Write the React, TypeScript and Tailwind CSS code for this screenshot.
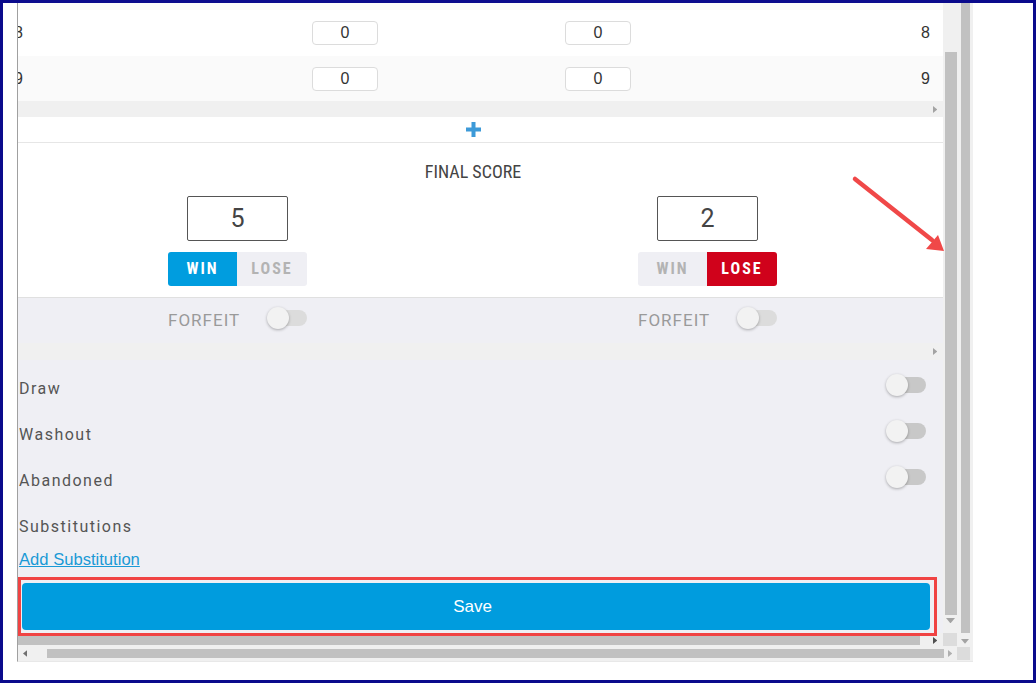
import React from "react";

const roboto = "font-['Roboto',sans-serif]";
const arial = "font-['Liberation_Sans',Arial,sans-serif]";
const narrow =
  "font-['Roboto_Condensed','Liberation_Sans_Narrow','DejaVu_Sans_Condensed',Roboto,sans-serif] [font-stretch:condensed]";

function Tri({ dir, color = "#a3a3a3", size = 7 }: { dir: "r" | "l" | "d"; color?: string; size?: number }) {
  const pts = dir === "r" ? "0,0 6,5 0,10" : dir === "l" ? "6,0 0,5 6,10" : "0,0 10,0 5,6";
  const vb = dir === "d" ? "0 0 10 6" : "0 0 6 10";
  return (
    <svg viewBox={vb} width={dir === "d" ? size : size * 0.6} height={dir === "d" ? size * 0.6 : size}>
      <polygon points={pts} fill={color} />
    </svg>
  );
}

function Toggle({ light }: { light?: boolean }) {
  return (
    <div className="relative h-[22px] w-[40px] shrink-0">
      <div
        className={`absolute right-0 top-[3px] h-[16px] w-[34px] rounded-full ${
          light ? "bg-[#dcdcdc]" : "bg-[#c8c8c8]"
        }`}
      />
      <div className="absolute left-0 top-0 h-[22px] w-[22px] rounded-full bg-[#f2f2f2] shadow-[0_1px_3px_rgba(0,0,0,0.3)]" />
    </div>
  );
}

function ZeroBox() {
  return (
    <div className="h-6 rounded-[4px] border border-[#dcdcdc] bg-white text-center text-[16px] leading-[22px] text-[#333]">
      0
    </div>
  );
}

function ScoreRow({ n, shade, h }: { n: number; shade?: boolean; h: string }) {
  return (
    <div
      className={`grid grid-cols-[310px_66px_187px_66px_1fr] items-center ${h} ${
        shade ? "bg-[#fafafa]" : "bg-white"
      } ${arial} text-[16px] text-[#333]`}
    >
      <span className="pl-3">{n}</span>
      <ZeroBox />
      <span />
      <ZeroBox />
      <span className="pr-[14px] text-right">{n}</span>
    </div>
  );
}

function ScrollStrip({ h }: { h: string }) {
  return (
    <div className={`flex ${h} items-center justify-end bg-[#f0f0f0] pr-[6px]`}>
      <Tri dir="r" />
    </div>
  );
}

function TeamScore({ score, won }: { score: number; won: boolean }) {
  return (
    <div className="flex flex-col items-center">
      <div
        className={`flex h-[45px] w-[101px] items-center justify-center rounded-[2px] border border-[#555] text-[25px] text-[#444] ${roboto}`}
      >
        {score}
      </div>
      <div className={`mt-[11px] flex h-[34px] w-[139px] overflow-hidden rounded-[3px] ${narrow}`}>
        <div
          className={`flex w-[69px] items-center justify-center text-[16px] font-bold tracking-[2px] ${
            won ? "bg-[#009ddf] text-white" : "bg-[#efeff4] text-[#b3b3b3]"
          }`}
        >
          WIN
        </div>
        <div
          className={`flex flex-1 items-center justify-center text-[16px] font-bold tracking-[2px] ${
            won ? "bg-[#efeff4] text-[#b3b3b3]" : "bg-[#d0021b] text-white"
          }`}
        >
          LOSE
        </div>
      </div>
    </div>
  );
}

function Forfeit() {
  return (
    <div className="flex justify-center">
      <div className="flex w-[139px] items-center justify-between">
        <span className={`mt-[1px] text-[17px] tracking-[1px] text-[#9a9a9a] ${roboto}`}>FORFEIT</span>
        <div className="mb-[5px]">
          <Toggle light />
        </div>
      </div>
    </div>
  );
}

function OptionRow({ label }: { label: string }) {
  return (
    <div className="flex h-[46px] items-center justify-between pl-px pr-[17px]">
      <span className={`text-[16px] tracking-[1.5px] text-[#555] ${roboto}`}>{label}</span>
      <div className="mb-2">
        <Toggle />
      </div>
    </div>
  );
}

export default function App() {
  return (
    <div className="relative h-[683px] w-[1036px] overflow-hidden border-[3px] border-[#0a0a8c] bg-white">
      <div className="flex pl-[14px]">
        <div className="flex h-[659px] w-[956px] flex-col border-b border-l border-b-[#e8e8e8] border-l-[#a0a0a0]">
          <div className="flex h-[643px]">
            {/* inner scroller */}
            <div className="grid w-[939px] grid-cols-[925px_14px] grid-rows-[630px_13px]">
              <div className="flex flex-col overflow-hidden">
                <div className="-ml-4 w-[942px]">
                  <div className="h-[7px] bg-[#fafafa]" />
                  <ScoreRow n={8} h="h-[46px]" />
                  <ScoreRow n={9} h="h-[45px]" shade />
                </div>
                <ScrollStrip h="h-[16px]" />
                <div className="-ml-4 w-[942px]">
                  <div className="flex h-[26px] items-center justify-center border-b border-[#e6e6e6] bg-white pb-[1px]">
                    <svg width="15" height="15" viewBox="0 0 15 15">
                      <rect x="5.5" y="0" width="4" height="15" fill="#3d9ad8" />
                      <rect x="0" y="5.5" width="15" height="4" fill="#3d9ad8" />
                    </svg>
                  </div>
                  <div className="h-[154px] bg-white pt-[19px]">
                    <div
                      className={`h-[20px] text-center text-[18px] leading-[20px] text-[#444] ${narrow}`}
                    >
                      FINAL SCORE
                    </div>
                    <div className="mt-[14px] grid grid-cols-2">
                      <TeamScore score={5} won />
                      <div className="-ml-[2px]">
                        <TeamScore score={2} won={false} />
                      </div>
                    </div>
                  </div>
                  <div className="grid h-[46px] grid-cols-2 items-center border-t border-[#e0e0e0] bg-[#efeff4]">
                    <Forfeit />
                    <div className="-ml-[2px]">
                      <Forfeit />
                    </div>
                  </div>
                </div>
                <ScrollStrip h="h-[17px]" />
                <div className="flex-1 bg-[#efeff4] pt-[6px]">
                  <OptionRow label="Draw" />
                  <OptionRow label="Washout" />
                  <OptionRow label="Abandoned" />
                  <div className="flex h-[46px] items-center pl-px">
                    <span className={`text-[16px] tracking-[1.5px] text-[#555] ${roboto}`}>Substitutions</span>
                  </div>
                  <div className={`pl-px text-[16.6px] leading-[19px] ${arial}`}>
                    <span className="text-[#1a9ad6] underline">Add Substitution</span>
                  </div>
                  <div className="ml-1 mr-[13px] mt-[14px]">
                    <button
                      type="button"
                      className={`flex h-[47px] w-full items-center justify-center rounded-[4px] bg-[#009cde] pr-[7px] text-[17px] text-white ${arial}`}
                    >
                      Save
                    </button>
                  </div>
                </div>
              </div>
              {/* inner vertical scrollbar */}
              <div className="flex flex-col items-end bg-[#f0f0f0] pt-[49px]">
                <div className="h-[563px] w-[12px] bg-[#c1c1c1]" />
                <div className="mt-[3px] flex w-[14px] justify-center">
                  <Tri dir="d" size={9} />
                </div>
              </div>
              {/* inner horizontal scrollbar */}
              <div className="flex items-start bg-[#f0f0f0] pt-[3px]">
                <div className="h-[9px] w-[902px] bg-[#c1c1c1]" />
                <div className="ml-[13px] mt-[1px]">
                  <Tri dir="r" color="#505050" />
                </div>
              </div>
              <div className="bg-[#dcdcdc]" />
            </div>
            {/* outer vertical scrollbar */}
            <div className="flex w-[16px] flex-col items-center bg-[#f0f0f0]">
              <div className="h-[630px] w-[9px] bg-[#c1c1c1]" />
              <div className="mt-[6px]">
                <Tri dir="d" size={8} />
              </div>
            </div>
          </div>
          {/* outer horizontal scrollbar */}
          <div className="flex h-[15px] items-center bg-[#f0f0f0]">
            <div className="ml-[5px] w-[24px]">
              <Tri dir="l" color="#707070" />
            </div>
            <div className="h-[9px] w-[897px] bg-[#c1c1c1]" />
            <div className="ml-[4px] w-[8px]">
              <Tri dir="r" color="#b0b0b0" />
            </div>
            <div className="ml-[1px] h-[13px] w-[13px] bg-[#dcdcdc]" />
          </div>
        </div>
      </div>

      {/* annotation: highlight box */}
      <div className="pointer-events-none absolute left-[15px] top-[574px] h-[59px] w-[919px] border-[3px] border-[#f04343]" />
      {/* annotation: arrow */}
      <svg
        className="pointer-events-none absolute left-0 top-0"
        width="1030"
        height="677"
        viewBox="3 3 1030 677"
      >
        <line x1="855" y1="179" x2="932" y2="240" stroke="#f04848" strokeWidth="4.5" strokeLinecap="round" />
        <polygon points="944,251 926,249 938,235" fill="#f04848" />
      </svg>
    </div>
  );
}
